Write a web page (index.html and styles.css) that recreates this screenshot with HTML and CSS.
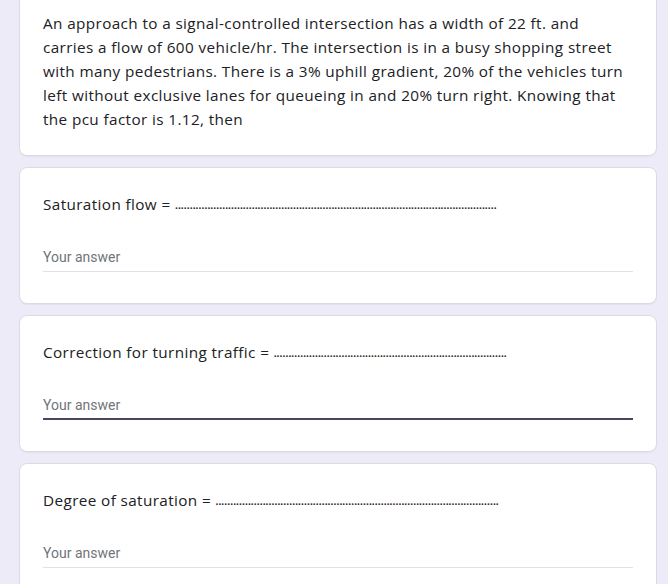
FILE: index.html
```html
<!DOCTYPE html>
<html>
<head>
<meta charset="utf-8">
<link rel="stylesheet" href="styles.css">
</head>
<body>
<div class="page">
  <div class="card intro">
    <p class="desc">An approach to a signal-controlled intersection has a width of 22 ft. and<br>carries a flow of 600 vehicle/hr. The intersection is in a busy shopping street<br>with many pedestrians. There is a 3% uphill gradient, 20% of the vehicles turn<br>left without exclusive lanes for queueing in and 20% turn right. Knowing that<br>the pcu factor is 1.12, then</p>
  </div>
  <div class="card question">
    <div class="title">Saturation flow = <span class="dots">.............................................................................................................</span></div>
    <div class="answer"><span class="placeholder">Your answer</span></div>
  </div>
  <div class="card question">
    <div class="title">Correction for turning traffic = <span class="dots">...............................................................................</span></div>
    <div class="answer focused"><span class="placeholder">Your answer</span></div>
  </div>
  <div class="card question">
    <div class="title">Degree of saturation = <span class="dots">................................................................................................</span></div>
    <div class="answer"><span class="placeholder">Your answer</span></div>
  </div>
</div>
</body>
</html>
```

FILE: styles.css
```css
html, body {
  margin: 0;
  padding: 0;
  background: #eeebf8;
  overflow: hidden;
}
.page {
  width: 638px;
  margin-left: 19px;
  margin-top: -14px;
  display: flex;
  flex-direction: column;
  gap: 11px;
}
.card {
  background: #fff;
  border: 1px solid #dcdbe3;
  border-radius: 8px;
  padding: 24px 23px;
  box-shadow: 0 1px 1px rgba(0,0,0,0.04);
}
.desc {
  margin: 0;
  font-family: "Open Sans", sans-serif;
  font-size: 15.3px;
  line-height: 24px;
  letter-spacing: 0.38px;
  color: #202124;
  white-space: nowrap;
}
.question {
  padding-bottom: 31px;
}
.title {
  font-family: "Open Sans", sans-serif;
  font-size: 15.3px;
  line-height: 24px;
  letter-spacing: 0.38px;
  color: #202124;
  white-space: nowrap;
  overflow: hidden;
}
.dots {
  font-size: 10px;
  font-weight: 700;
  letter-spacing: 0.1px;
  color: #222;
  vertical-align: 1px;
}
.answer {
  margin-top: 27px;
  border-bottom: 1px solid #e0e0e6;
  height: 27px;
  width: 590px;
}
.answer.focused {
  border-bottom: 2px solid #4c4562;
  height: 26px;
}
.placeholder {
  display: block;
  font-family: Roboto, sans-serif;
  font-size: 14px;
  line-height: 20px;
  color: #70757a;
  padding-top: 3px;
}
```
